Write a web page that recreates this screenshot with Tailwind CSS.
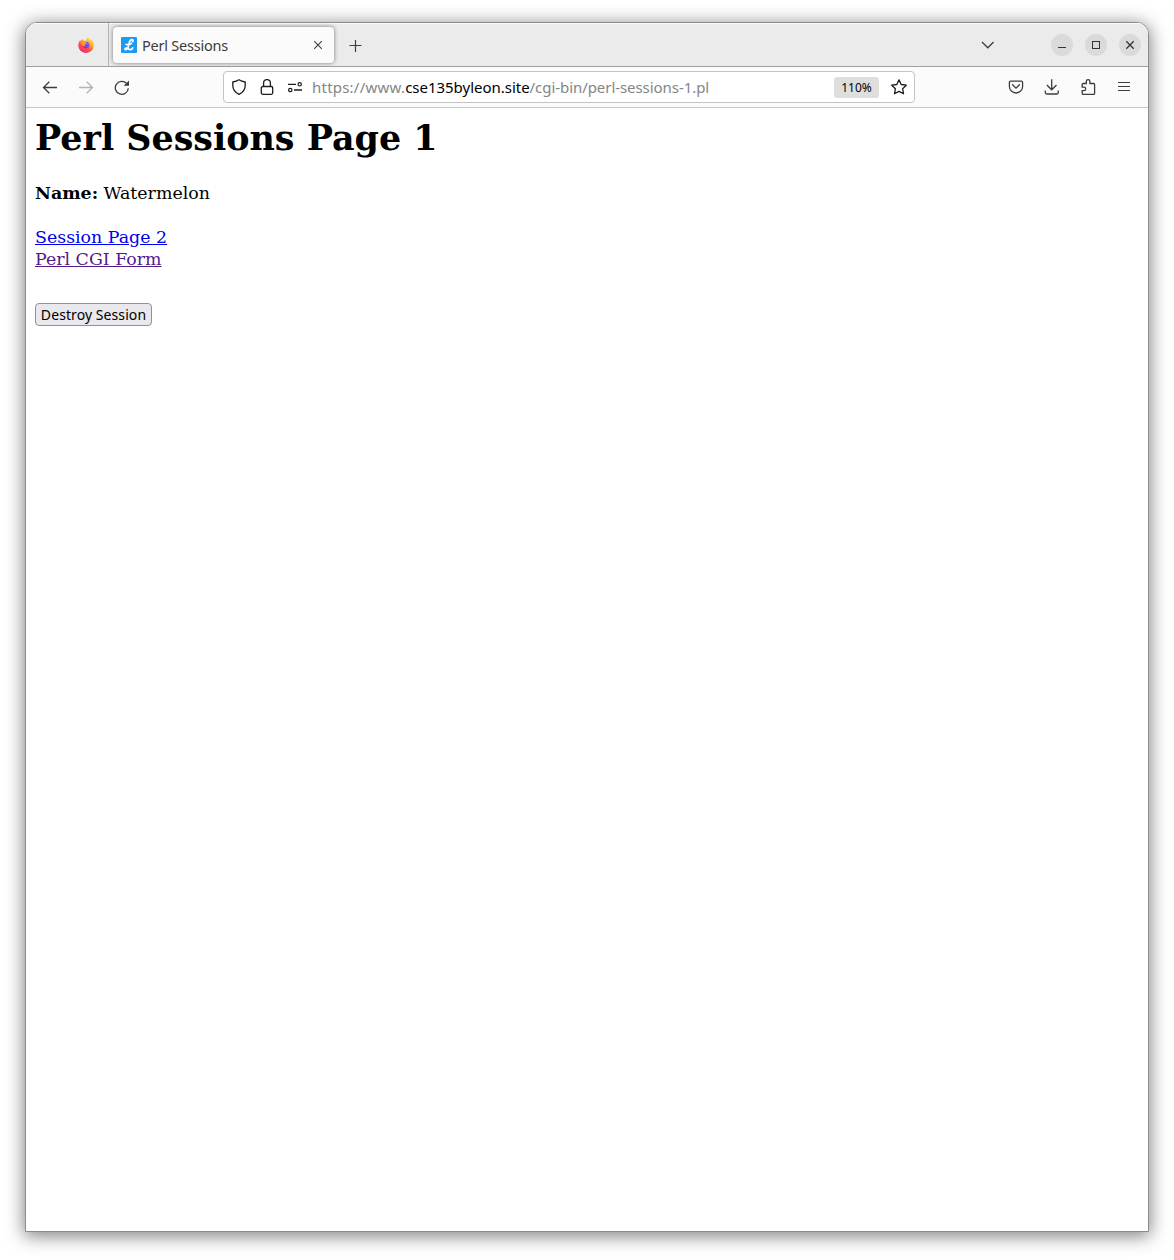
<!DOCTYPE html>
<html lang="en">
<head>
<meta charset="utf-8">
<title>Perl Sessions</title>
<script src="https://cdn.jsdelivr.net/npm/@tailwindcss/browser@4"></script>
</head>
<body class="bg-white h-[1260px] w-[1174px] overflow-hidden pt-[22px] pl-[25px]">
<div class="flex flex-col w-[1124px] h-[1210px] bg-white border border-[#8c8c8c] rounded-t-[12px] overflow-hidden shadow-[0_3px_18px_1px_rgba(0,0,0,0.5)] font-['Noto_Sans','Open_Sans',sans-serif]">
  <header class="flex shrink-0 h-[44px] bg-[#ebebeb] border-b border-[#a0a0a0] shadow-[inset_0_1px_0_#fafafa]">
    <div class="w-[83px] border-r border-[#b4b4b4] flex items-center pl-[52px] pt-px">
      <svg class="size-4" viewBox="0 0 16 16">
        <defs>
          <linearGradient id="fire" x1="0.85" y1="0" x2="0.25" y2="1"><stop offset="0" stop-color="#fff04a"/><stop offset=".35" stop-color="#ffb02e"/><stop offset=".65" stop-color="#ff4f45"/><stop offset="1" stop-color="#f0257c"/></linearGradient>
          <linearGradient id="globe" x1="0.8" y1="0" x2="0.2" y2="1"><stop offset="0" stop-color="#9059ff"/><stop offset="1" stop-color="#5b3fc9"/></linearGradient>
        </defs>
        <path fill="url(#fire)" d="M10.3.3c.2 1.3 1 1.900 1.900 2.800.3-.3.4-.7.4-1.100C14.500 3.500 15.800 5.800 15.800 8.300 15.800 12.600 12.300 15.900 8 15.900S.3 12.600.3 8.300C.3 6 1.200 4.200 2.200 2.900c0 .5.1 1 .4 1.300C3 3.200 3.800 2.200 4.600 1.700c0 .7.2 1.300.6 1.800 1-.1 1.900.1 2.700.5C8 2.500 8.900 1.100 10.300.3z"/>
        <circle cx="8.100" cy="8.100" r="3.300" fill="url(#globe)"/>
        <path fill="#ff9a2e" d="M3 4.800c1.500-1 3.200-.8 4.400.5.400.4.900.6 1.600.7-.3 1-1.200 1.200-1.900 1.500-.6.300-.5 1.100.3 1.700-2 .4-4.200-.8-4.400-4.400z"/>
      </svg>
    </div>
    <div class="ml-1 mt-1 w-[221px] h-[36px] rounded bg-[#fbfbfb] shadow-[0_0_4px_rgba(0,0,0,0.5)] flex items-center pl-2 pr-[11px]">
      <svg class="size-4 shrink-0" viewBox="0 0 16 16"><rect width="16" height="16" rx="1" fill="#1e9bf0"/><path d="M11.600 4.600c.8-1 .5-1.900-.5-1.900-2 0-2.800 2.300-3.200 4.500-.4 2.400-1.100 5.200-2.800 5.400-1.300.1-1.600-1.200-.4-1.500 1.800-.4 3 1.700 5 1.500 1.100-.1 1.800-.8 2-1.700M5 7.500c1.700.3 4-.3 5.400-1.100" fill="none" stroke="#fff" stroke-width="1.700" stroke-linecap="round"/></svg>
      <span class="ml-[5px] text-[14.5px] leading-5 tracking-[-0.22px] text-[#3d3d3d] whitespace-nowrap">Perl Sessions</span>
      <svg class="ml-auto size-[10px]" viewBox="0 0 10 10"><path d="M1.200 1.200l7.600 7.600M8.800 1.200L1.200 8.800" stroke="#3d3d3d" stroke-width="1.100"/></svg>
    </div>
    <svg class="ml-[15px] mt-[17px] size-[13px]" viewBox="0 0 13 13"><path d="M6.500 0v12M.5 5.500h12" stroke="#3d3d3d" stroke-width="1.200"/></svg>
    <div class="ml-auto flex items-center pr-[7px] gap-3">
      <svg class="w-[13px] h-2 mr-[45px]" viewBox="0 0 13 8"><path d="M1 1l5.800 5.800L12.600 1" fill="none" stroke="#3d3d3d" stroke-width="1.300"/></svg>
      <svg class="size-[22px]" viewBox="0 0 22 22"><circle cx="11" cy="11" r="11" fill="#dadada"/><path d="M7 13.500h8" stroke="#333"/></svg>
      <svg class="size-[22px]" viewBox="0 0 22 22"><circle cx="11" cy="11" r="11" fill="#dadada"/><rect x="7.500" y="7.500" width="7" height="7" fill="none" stroke="#333"/></svg>
      <svg class="size-[22px]" viewBox="0 0 22 22"><circle cx="11" cy="11" r="11" fill="#dadada"/><path d="M7.300 7.300l7.400 7.400M14.700 7.300l-7.400 7.400" stroke="#333" stroke-width="1.300"/></svg>
    </div>
  </header>
  <nav class="flex shrink-0 items-center h-[41px] bg-[#fbfbfb] border-b border-[#c6c6c6] pl-4 pr-4">
    <div class="flex gap-5 w-[181px]">
      <svg class="size-4" viewBox="0 0 16 16"><path d="M15 8.500H1.500M7.300 2.800L1.500 8.500l5.800 5.700" fill="none" stroke="#3d3d3d" stroke-width="1.300"/></svg>
      <svg class="size-4" viewBox="0 0 16 16"><path d="M1 8.500h13.500M8.700 2.800l5.800 5.700-5.800 5.700" fill="none" stroke="#b3b3b3" stroke-width="1.300"/></svg>
      <svg class="size-4" viewBox="0 0 16 16"><path d="M14.300 9.200A6.500 6.500 0 1 1 12.600 4.400" fill="none" stroke="#3d3d3d" stroke-width="1.300"/><path d="M15 1.500v5.300H9.700z" fill="#3d3d3d"/></svg>
    </div>
    <div class="flex items-center w-[692px] h-8 bg-white border border-[#c4c4c4] rounded pl-[7px] pr-[7px]">
      <div class="flex gap-3 shrink-0">
        <svg class="size-4" viewBox="0 0 16 16"><path d="M8 .8C6.100 2 4.100 2.600 1.800 3v3.400c0 3.800 2.300 7 6.200 8.900 3.900-1.900 6.200-5.100 6.200-8.900V3C11.900 2.600 9.900 2 8 .8z" fill="none" stroke="#1c1c1c" stroke-width="1.300" stroke-linejoin="round"/></svg>
        <svg class="size-4" viewBox="0 0 16 16"><rect x="2.300" y="7.500" width="11.400" height="7.800" rx="1.500" fill="none" stroke="#1c1c1c" stroke-width="1.300"/><path d="M4.600 7.500V4a3.400 3.400 0 0 1 6.800 0v3.500" fill="none" stroke="#1c1c1c" stroke-width="1.300"/></svg>
        <svg class="size-4" viewBox="0 0 16 16"><path d="M1 5.300h8M7 11h8" fill="none" stroke="#1c1c1c" stroke-width="1.300"/><circle cx="12.700" cy="5.300" r="1.700" fill="none" stroke="#1c1c1c" stroke-width="1.200"/><circle cx="3.300" cy="11" r="1.700" fill="none" stroke="#1c1c1c" stroke-width="1.200"/></svg>
      </div>
      <span class="ml-[9px] text-[15px] leading-5 text-[#858585] whitespace-nowrap"><span class="tracking-[0.22px]">https://www.</span><span class="text-black tracking-[-0.02px]">cse135byleon.site</span><span class="tracking-[-0.06px]">/cgi-bin/perl-sessions-1.pl</span></span>
      <span class="ml-auto w-[45px] h-[21px] rounded-[3px] bg-[#dedede] text-black text-[12px] leading-[21px] text-center shrink-0">110%</span>
      <svg class="ml-3 size-4 shrink-0" viewBox="0 0 16 16"><path d="M8 .9l2.200 4.600 5.100.7-3.700 3.500.9 5.100L8 12.400l-4.500 2.400.9-5.100L.7 6.200l5.100-.7z" fill="none" stroke="#1c1c1c" stroke-width="1.300" stroke-linejoin="round"/></svg>
    </div>
    <div class="ml-auto flex gap-5">
      <svg class="size-4" viewBox="0 0 16 16"><path d="M2.600 2.200h10.800a1.200 1.200 0 0 1 1.200 1.200v4a6.600 6.600 0 0 1-13.200 0v-4a1.200 1.200 0 0 1 1.200-1.200z" fill="none" stroke="#3d3d3d" stroke-width="1.300"/><path d="M4.600 5.800L8 9.100l3.400-3.300" fill="none" stroke="#3d3d3d" stroke-width="1.300" stroke-linecap="round"/></svg>
      <svg class="size-4" viewBox="0 0 16 16"><path d="M7.700.3v10.500M2.900 6l4.800 4.800L12.500 6M1.300 11.500v2a1.500 1.500 0 0 0 1.500 1.500h10a1.500 1.500 0 0 0 1.500-1.500v-2" fill="none" stroke="#3d3d3d" stroke-width="1.300"/></svg>
      <svg class="size-4" viewBox="0 0 16 16"><path d="M6.300 4.500V2.500a1.800 1.800 0 0 1 3.600 0v2h3.700a1 1 0 0 1 1 1v8.900a1 1 0 0 1-1 1H3.200a1 1 0 0 1-1-1v-2.700h1.700a1.800 1.800 0 0 0 0-3.600H2.200V5.500a1 1 0 0 1 1-1z" fill="none" stroke="#3d3d3d" stroke-width="1.300"/></svg>
      <svg class="size-4" viewBox="0 0 16 16"><path d="M2 3.500h12M2 7.500h12M2 11.500h12" stroke="#3d3d3d" stroke-width="1.200"/></svg>
    </div>
  </nav>
  <main class="pl-[9px] pt-[9px] font-['DejaVu_Serif',serif] text-[17.4px] leading-[22px] text-black">
    <h1 class="text-[34.9px] leading-[41px] font-bold">Perl Sessions Page 1</h1>
    <p class="mt-6"><b>Name:</b> Watermelon</p>
    <div class="mt-[22px] flex flex-col items-start">
      <a class="underline text-[#0000ee]">Session Page 2</a>
      <a class="underline text-[#551a8b]">Perl CGI Form</a>
    </div>
    <button class="mt-[33px] block w-[117px] h-[23px] rounded border border-[#8f8f9d] bg-[#e9e9ed] font-['Noto_Sans','Open_Sans',sans-serif] text-[14px] leading-[21px] tracking-[0.08px] whitespace-nowrap p-0 text-center">Destroy Session</button>
  </main>
</div>
</body>
</html>
